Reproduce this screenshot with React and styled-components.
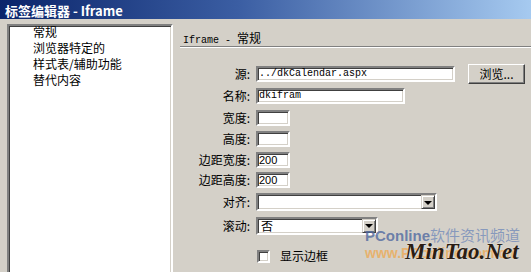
import styled, { createGlobalStyle } from 'styled-components';

const GlobalStyle = createGlobalStyle`
    body {
        margin: 0;
        background: #d4d0c8;
        font-family: "Noto Sans CJK SC", "Liberation Sans", sans-serif;
    }
`;

const Window = styled.div`
    position: relative;
    width: 531px;
    height: 272px;
    overflow: hidden;
    background: #d4d0c8;
    display: flex;
    flex-direction: column;
`;

const TitleBar = styled.div`
    height: 19px;
    padding-left: 5px;
    background: linear-gradient(to right, #0a246a 0%, #3b5ea3 45%, #a6caf0 100%);
    color: #fff;
    font-weight: bold;
    font-size: 13px;
    line-height: 21px;
    white-space: nowrap;
`;

const Content = styled.div`
    flex: 1;
    display: flex;
    padding: 5px 0 0 7px;
`;

const TagList = styled.ul`
    margin: 0;
    padding: 0;
    list-style: none;
    width: 166px;
    height: 260px;
    box-sizing: border-box;
    background: #fff;
    border: 2px solid;
    border-color: #808080 #fff #fff #808080;
    box-shadow: inset 1px 1px 0 #404040, inset -1px -1px 0 #d4d0c8;
`;

const TagItem = styled.li`
    height: 16px;
    line-height: 12px;
    padding-left: 24px;
    font-size: 12px;
    color: #000;
    white-space: nowrap;
`;

const Panel = styled.div`
    flex: 1;
    padding-left: 7px;
`;

const PanelHeader = styled.div`
    height: 23px;
    box-sizing: border-box;
    padding: 7px 0 0 3px;
    font-size: 12px;
    line-height: 14px;
    border-bottom: 1px solid #808080;
    box-shadow: 0 1px 0 #fff;
    white-space: nowrap;
`;

const Mono = styled.span`
    font-family: "Liberation Mono", monospace;
    font-size: 10px;
`;

const Form = styled.div`
    display: flex;
    flex-direction: column;
    padding-top: 16px;
`;

const Row = styled.div`
    display: grid;
    grid-template-columns: 70px auto;
    column-gap: 6px;
    align-items: center;
    height: ${p => p.$h}px;
    margin-top: ${p => p.$gap || 0}px;
`;

const Label = styled.label`
    text-align: right;
    font-size: 12px;
    line-height: 14px;
    white-space: nowrap;
`;

const Inline = styled.div`
    display: flex;
    align-items: center;
    gap: ${p => p.$gap || 0}px;
`;

const Field = styled.div`
    width: ${p => p.$w}px;
    height: 16px;
    box-sizing: border-box;
    background: #fff;
    border: 2px solid;
    border-color: #808080 #fff #fff #808080;
    box-shadow: inset 1px 1px 0 #404040, inset -1px -1px 0 #d4d0c8;
    padding-left: 1px;
    font-family: ${p => (p.$sans ? '"Liberation Sans", sans-serif' : '"Liberation Mono", monospace')};
    font-size: ${p => (p.$sans ? 11 : 10)}px;
    line-height: 12px;
    white-space: nowrap;
    overflow: hidden;
`;

const BrowseButton = styled.button`
    width: 57px;
    height: 20px;
    padding: 0;
    background: #d4d0c8;
    border: 1px solid;
    border-color: #fff #404040 #404040 #fff;
    box-shadow: inset -1px -1px 0 #808080, inset 1px 1px 0 #d4d0c8;
    font-family: "Noto Sans CJK SC", sans-serif;
    font-size: 12px;
    color: #000;
    line-height: 16px;
`;

const Select = styled.div`
    width: ${p => p.$w}px;
    height: 18px;
    box-sizing: border-box;
    background: #fff;
    border: 2px solid;
    border-color: #808080 #fff #fff #808080;
    box-shadow: inset 1px 1px 0 #404040, inset -1px -1px 0 #d4d0c8;
    display: flex;
    align-items: center;
    justify-content: space-between;
    padding-left: 3px;
    font-size: 12px;
    line-height: 14px;
`;

const DropButton = styled.span`
    width: 14px;
    height: 14px;
    box-sizing: border-box;
    background: #d4d0c8;
    border: 1px solid;
    border-color: #d4d0c8 #404040 #404040 #d4d0c8;
    box-shadow: inset 1px 1px 0 #fff, inset -1px -1px 0 #808080;
    display: flex;
    align-items: center;
    justify-content: center;

    &::after {
        content: '';
        border-left: 4px solid transparent;
        border-right: 4px solid transparent;
        border-top: 4px solid #000;
        margin-top: 1px;
    }
`;

const Checkbox = styled.span`
    width: 13px;
    height: 13px;
    box-sizing: border-box;
    margin-left: 1px;
    background: #fff;
    border: 2px solid;
    border-color: #808080 #fff #fff #808080;
    box-shadow: inset 1px 1px 0 #404040, inset -1px -1px 0 #d4d0c8;
`;

const CheckLabel = styled.span`
    font-size: 12px;
    line-height: 14px;
`;

const Watermark = styled.div`
    position: absolute;
    left: 365px;
    top: 227px;
    pointer-events: none;
    white-space: nowrap;
`;

const Brand = styled.div`
    font-family: "Liberation Sans", "Noto Sans CJK SC", sans-serif;
    font-size: 15px;
    line-height: 18px;
    color: rgba(110, 135, 185, 0.75);

    b {
        font-weight: bold;
        color: rgba(80, 105, 160, 0.8);
    }
`;

const Site = styled.div`
    font-family: "Liberation Sans", sans-serif;
    font-weight: bold;
    font-size: 14px;
    line-height: 16px;
    color: rgba(240, 165, 70, 0.7);
`;

const Signature = styled.div`
    position: absolute;
    left: 40px;
    top: 12px;
    font-family: "Liberation Serif", serif;
    font-style: italic;
    font-weight: bold;
    font-size: 23px;
    line-height: 26px;
    color: #2a1d14;
    text-shadow: 0 0 2px rgba(255, 255, 255, 0.7);
`;

const tags = ['常规', '浏览器特定的', '样式表/辅助功能', '替代内容'];

export default function App() {
    return (
        <>
            <GlobalStyle />
            <Window>
                <TitleBar>标签编辑器 - Iframe</TitleBar>
                <Content>
                    <TagList>
                        {tags.map(t => <TagItem key={t}>{t}</TagItem>)}
                    </TagList>
                    <Panel>
                        <PanelHeader><Mono>Iframe - </Mono>常规</PanelHeader>
                        <Form>
                            <Row $h={22}>
                                <Label>源:</Label>
                                <Inline $gap={13}>
                                    <Field $w={199}>../dkCalendar.aspx</Field>
                                    <BrowseButton>浏览...</BrowseButton>
                                </Inline>
                            </Row>
                            <Row $h={22}>
                                <Label>名称:</Label>
                                <Field $w={149}>dkifram</Field>
                            </Row>
                            <Row $h={21}>
                                <Label>宽度:</Label>
                                <Field $w={34} />
                            </Row>
                            <Row $h={21}>
                                <Label>高度:</Label>
                                <Field $w={34} />
                            </Row>
                            <Row $h={21}>
                                <Label>边距宽度:</Label>
                                <Field $w={34} $sans>200</Field>
                            </Row>
                            <Row $h={20}>
                                <Label>边距高度:</Label>
                                <Field $w={34} $sans>200</Field>
                            </Row>
                            <Row $h={24}>
                                <Label>对齐:</Label>
                                <Select $w={181}><span /><DropButton /></Select>
                            </Row>
                            <Row $h={23}>
                                <Label>滚动:</Label>
                                <Select $w={122}><span>否</span><DropButton /></Select>
                            </Row>
                            <Row $h={22} $gap={8}>
                                <span />
                                <Inline $gap={10}>
                                    <Checkbox />
                                    <CheckLabel>显示边框</CheckLabel>
                                </Inline>
                            </Row>
                        </Form>
                    </Panel>
                </Content>
                <Watermark>
                    <Brand><b>PConline</b>软件资讯频道</Brand>
                    <Site>www.PConline.com.cn</Site>
                    <Signature>MinTao.Net</Signature>
                </Watermark>
            </Window>
        </>
    );
}
